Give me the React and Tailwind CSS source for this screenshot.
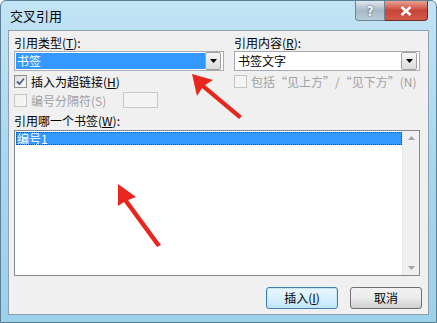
import React from "react";

const font = { fontFamily: '"Noto Sans CJK SC", "Noto Sans", sans-serif' };

function DropArrow() {
  return (
    <div className="w-[16px] h-[18px] mr-px border border-[#a0a0a0] rounded-[2px] bg-gradient-to-b from-[#f6f6f6] to-[#dcdcdc] flex items-center justify-center">
      <svg width="7" height="4" viewBox="0 0 7 4"><path d="M0 0h7L3.5 4z" fill="#000" /></svg>
    </div>
  );
}

function Check({ checked, disabled }) {
  return (
    <div
      className={`w-[13px] h-[13px] border ${disabled ? "border-[#c4c4c4] bg-[#f4f4f4]" : "border-[#8e8f8f] bg-gradient-to-br from-[#dcdcdc] to-[#fdfdfd]"} flex items-center justify-center`}
    >
      {checked && (
        <svg width="9" height="9" viewBox="0 0 9 9">
          <path d="M1 4.5l2.5 2.5L8 1.5" stroke="#4a5f97" strokeWidth="1.8" fill="none" />
        </svg>
      )}
    </div>
  );
}

export default function App() {
  return (
    <div
      className="relative w-[437px] h-[323px] flex flex-col bg-gradient-to-b from-[#c2e4f5] via-[#a6d8ee] to-[#9dd0ea] border border-[#5d7f95] rounded-t-[6px] overflow-hidden text-[12px] text-black"
      style={font}
    >
      {/* title bar */}
      <div className="h-[29px] flex items-start justify-between pl-[9px] pr-[8px]">
        <div className="pt-[6px] text-[13px] leading-[18px] text-black">交叉引用</div>
        <div className="flex">
          <div className="w-[30px] h-[20px] rounded-bl-[4px] border border-t-0 border-[#6d8294] bg-gradient-to-b from-[#dfe8ef] via-[#a7b9c8] to-[#b9ccd9] flex items-center justify-center text-white text-[13px] font-bold leading-none [text-shadow:0_0_2px_#333]">?</div>
          <div className="w-[43px] h-[20px] rounded-br-[4px] border border-t-0 border-l-0 border-[#6b2a22] bg-gradient-to-b from-[#e8a093] via-[#c7453a] to-[#d3584a] flex items-center justify-center">
            <svg width="12" height="10" viewBox="0 0 12 10">
              <path d="M1.5 1l9 8M10.5 1l-9 8" stroke="#fff" strokeWidth="2.6" />
            </svg>
          </div>
        </div>
      </div>

      {/* client area */}
      <div className="flex-1 mx-[7px] mb-[7px] bg-[#f0f0f0] border border-[#8da1b2] flex flex-col px-[5px] pt-[5px] pb-[5px]">
        <div className="flex gap-[10px]">
          {/* left column */}
          <div className="w-[210px] flex flex-col">
            <div className="h-[14px] leading-[14px]">引用类型(<span className="underline">T</span>):</div>
            <div className="mt-[1px] h-[20px] border border-[#a5acb5] bg-white flex items-center p-px">
              <div className="flex-1 h-[16px] bg-[#3399ff] text-white leading-[16px] px-[1px]">书签</div>
              <DropArrow />
            </div>
            <div className="mt-[4px] h-[13px] flex items-center gap-[4px]">
              <Check checked />
              <span className="leading-[13px]">插入为超链接(<span className="underline">H</span>)</span>
            </div>
            <div className="mt-[4px] h-[16px] flex items-center gap-[4px] text-[#a0a0a0]">
              <Check disabled />
              <span className="leading-[13px]">编号分隔符(S)</span>
              <div className="ml-[13px] w-[35px] h-[16px] border border-[#c8c8c8] bg-[#f4f4f4]" />
            </div>
          </div>
          {/* right column */}
          <div className="w-[186px] flex flex-col">
            <div className="h-[14px] leading-[14px]">引用内容(<span className="underline">R</span>):</div>
            <div className="mt-[1px] h-[20px] border border-[#a5acb5] bg-white flex items-center p-px">
              <div className="flex-1 h-[16px] leading-[16px] px-[2px]">书签文字</div>
              <DropArrow />
            </div>
            <div className="mt-[4px] h-[13px] flex items-center gap-[4px] text-[#a0a0a0]">
              <Check disabled />
              <span className="leading-[13px] whitespace-nowrap">包括“见上方”/“见下方”(N)</span>
            </div>
          </div>
        </div>

        <div className="mt-[6px] h-[14px] leading-[14px]">引用哪一个书签(<span className="underline">W</span>):</div>
        <div className="mt-[2px] h-[146px] w-[406px] border border-[#828790] bg-white flex">
          <div className="flex-1 pt-px pl-px">
            <div className="h-[13px] bg-[#3399ff] text-white leading-[13px] px-[1px] outline-dotted outline-1 outline-[#1a4a80] -outline-offset-1">编号1</div>
          </div>
          <div className="w-[17px] bg-[#f0f0f0] border-l border-[#e8e8e8] flex flex-col justify-between items-center py-[5px]">
            <svg width="7" height="4" viewBox="0 0 7 4"><path d="M0 4h7L3.5 0z" fill="#a3a3a3" /></svg>
            <svg width="7" height="4" viewBox="0 0 7 4"><path d="M0 0h7L3.5 4z" fill="#a3a3a3" /></svg>
          </div>
        </div>

        <div className="mt-[11px] flex justify-end gap-[12px] pr-[1px]">
          <div className="w-[72px] h-[22px] rounded-[3px] border border-[#3c7fb1] bg-gradient-to-b from-[#eaf6fd] via-[#d9f0fc] to-[#bee6fd] flex items-center justify-center shadow-[inset_0_0_0_1px_#c4e5f6]">插入(<span className="underline">I</span>)</div>
          <div className="w-[72px] h-[22px] rounded-[3px] border border-[#707070] bg-gradient-to-b from-[#f2f2f2] via-[#ebebeb] to-[#cfcfcf] flex items-center justify-center">取消</div>
        </div>
      </div>

      {/* red annotation arrows */}
      <svg className="absolute inset-0 pointer-events-none" width="437" height="323" viewBox="0 0 437 323">
        <polygon points="191,73 212,79 204,84 241,115 238,118 201,87 196,95" fill="#e8261e" />
        <polygon points="117,183 135,196 127,199 160,244 156,246 123,201 117,205" fill="#e8261e" />
      </svg>
    </div>
  );
}
